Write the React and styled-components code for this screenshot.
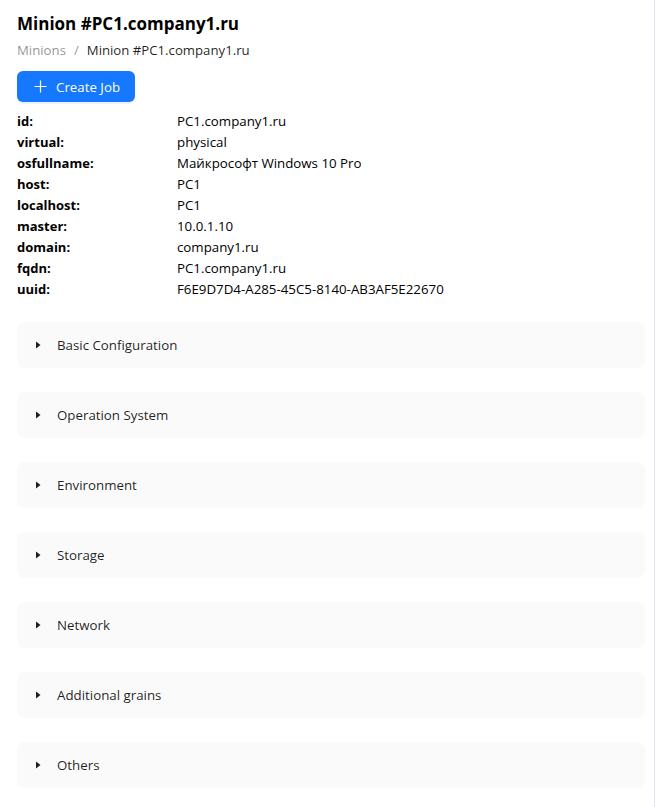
import styled, { createGlobalStyle } from "styled-components";

const GlobalStyle = createGlobalStyle`
  body {
    margin: 0;
    background: #ffffff;
    font-family: "Segoe UI", "Open Sans", "Liberation Sans", sans-serif;
    color: rgba(0, 0, 0, 0.88);
  }
`;

const grains = [
  ["id", "PC1.company1.ru"],
  ["virtual", "physical"],
  ["osfullname", "Майкрософт Windows 10 Pro"],
  ["host", "PC1"],
  ["localhost", "PC1"],
  ["master", "10.0.1.10"],
  ["domain", "company1.ru"],
  ["fqdn", "PC1.company1.ru"],
  ["uuid", "F6E9D7D4-A285-45C5-8140-AB3AF5E22670"],
];

const sections = [
  "Basic Configuration",
  "Operation System",
  "Environment",
  "Storage",
  "Network",
  "Additional grains",
  "Others",
];

export default function App() {
  return (
    <>
      <GlobalStyle />
      <Page>
        <Title>Minion #PC1.company1.ru</Title>
        <Breadcrumb>
          <Crumb $muted>Minions</Crumb>
          <Separator>/</Separator>
          <Crumb>Minion #PC1.company1.ru</Crumb>
        </Breadcrumb>
        <PrimaryButton type="button">
          <svg width="13" height="13" viewBox="0 0 13 13" fill="none">
            <path d="M6.5 0.5v12M0.5 6.5h12" stroke="currentColor" strokeWidth="1.2" />
          </svg>
          Create Job
        </PrimaryButton>
        <InfoTable>
          {grains.map(([key, value]) => (
            <InfoRow key={key}>
              <InfoKey>{key}:</InfoKey>
              <InfoValue>{value}</InfoValue>
            </InfoRow>
          ))}
        </InfoTable>
        <Panels>
          {sections.map((name) => (
            <Panel key={name}>
              <Caret viewBox="0 0 10 10" width="10" height="10">
                <path d="M3 1.5 L7.5 5 L3 8.5 Z" fill="currentColor" />
              </Caret>
              <PanelTitle>{name}</PanelTitle>
            </Panel>
          ))}
        </Panels>
      </Page>
    </>
  );
}

const Page = styled.div`
  width: 655px;
  min-height: 807px;
  box-sizing: border-box;
  border-right: 1px solid #dce4f2;
  padding: 10px 9px 20px 17px;
`;

const Title = styled.h1`
  margin: 0;
  font-size: 17px;
  font-weight: 700;
  line-height: 28px;
  color: #000;
`;

const Breadcrumb = styled.nav`
  display: flex;
  align-items: center;
  margin-top: 1px;
  font-size: 13.2px;
  line-height: 22px;
`;

const Crumb = styled.span`
  color: ${(p) => (p.$muted ? "rgba(0, 0, 0, 0.45)" : "rgba(0, 0, 0, 0.88)")};
`;

const Separator = styled.span`
  color: rgba(0, 0, 0, 0.45);
  margin: 0 8px;
`;

const PrimaryButton = styled.button`
  display: inline-flex;
  align-items: center;
  justify-content: flex-start;
  gap: 9px;
  margin-top: 10px;
  height: 31px;
  width: 118px;
  padding: 0 0 0 17px;
  border: none;
  border-radius: 6px;
  background: #1677ff;
  color: #fff;
  font-family: inherit;
  font-size: 13.3px;
  white-space: nowrap;
  box-shadow: 0 2px 0 rgba(5, 145, 255, 0.1);
  cursor: pointer;
`;

const InfoTable = styled.div`
  display: flex;
  flex-direction: column;
  margin-top: 9px;
`;

const InfoRow = styled.div`
  display: grid;
  grid-template-columns: 160px 1fr;
  font-size: 13.3px;
  line-height: 21px;
`;

const InfoKey = styled.span`
  font-weight: 700;
  font-size: 13px;
  color: #000;
`;

const InfoValue = styled.span`
  color: #000;
`;

const Panels = styled.div`
  display: flex;
  flex-direction: column;
  gap: 24px;
  margin-top: 22px;
`;

const Panel = styled.div`
  display: flex;
  align-items: center;
  gap: 14px;
  height: 46px;
  padding: 0 16px;
  border-radius: 8px;
  background: #fafafa;
`;

const Caret = styled.svg`
  color: rgba(0, 0, 0, 0.88);
`;

const PanelTitle = styled.span`
  font-size: 13.3px;
  color: rgba(0, 0, 0, 0.88);
`;
